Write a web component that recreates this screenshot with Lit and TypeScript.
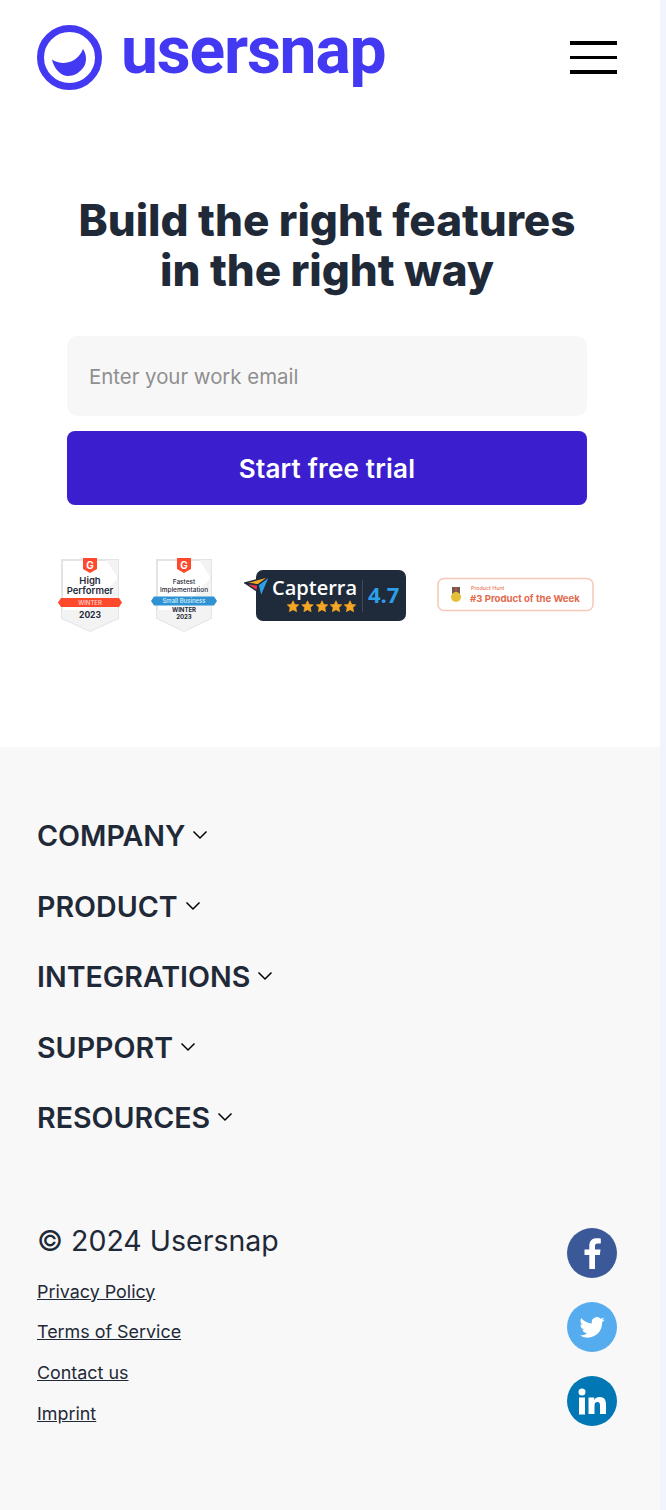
import { LitElement, html, css, svg } from "lit";
import { customElement } from "lit/decorators.js";

const star = (x: number, fill = "#f6a623") =>
  svg`<polygon transform="translate(${x} 0) scale(1.1)" fill=${fill} stroke=${fill} stroke-width=".6" stroke-linejoin="round" points="0,-5.2 1.6,-1.9 5.2,-1.5 2.6,1 3.300,4.700 0,2.900 -3.300,4.700 -2.600,1 -5.200,-1.500 -1.600,-1.900"/>`;

const nav = ["COMPANY", "PRODUCT", "INTEGRATIONS", "SUPPORT", "RESOURCES"];
const links = ["Privacy Policy", "Terms of Service", "Contact us", "Imprint"];

@customElement("app-root")
export class AppRoot extends LitElement {
  static styles = css`
    :host {
      display: block;
      width: 666px;
      height: 1510px;
      background: #f1f5fb;
      font-family: Inter, "Liberation Sans", sans-serif;
      color: #1f2937;
      overflow: hidden;
    }
    .page { width: 660px; }
    .top { background: #fff; height: 747px; padding: 25px 43px 0 37px; box-sizing: border-box; }
    header { display: flex; justify-content: space-between; align-items: center; height: 65px; }
    .brand { display: flex; align-items: center; gap: 19px; height: 65px; }
    .wordmark {
      font-family: Roboto, sans-serif;
      font-weight: 700;
      font-size: 66px;
      line-height: 65px;
      letter-spacing: -1.2px;
      color: #4339f2;
      margin-top: -14px;
    }
    .burger { display: flex; flex-direction: column; gap: 11px; width: 47px; }
    .burger i { display: block; height: 3.5px; background: #000; }
    h1 {
      margin: 105px 0 0;
      font-size: 44px;
      line-height: 50px;
      font-weight: 800;
      letter-spacing: -0.05px;
      text-align: center;
      color: #1f2937;
    }
    form { margin: 41px 30px 0; display: flex; flex-direction: column; gap: 15px; }
    .input {
      height: 80px;
      background: #f7f7f7;
      border-radius: 10px;
      display: flex;
      align-items: center;
      padding: 0 22px;
      font-size: 20.4px;
      color: #8f8f8f;
    }
    .btn {
      height: 74px;
      background: #3b1fcf;
      border-radius: 8px;
      color: #fff;
      font-size: 26px;
      letter-spacing: 0.2px;
      font-weight: 600;
      display: flex;
      align-items: center;
      justify-content: center;
    }
    .badges { display: flex; align-items: center; margin: 51px 0 0 21px; height: 80px; }
    .badges svg { display: block; flex: none; }
    .b2 { margin-left: 27px; }
    .b3 { margin: -2px 0 0 27px; }
    .b4 { margin: -2px 0 0 29px; }
    footer { background: #f8f8f9; height: 763px; padding: 0 43px 0 37px; box-sizing: border-box; }
    .nav { padding-top: 54px; display: flex; flex-direction: column; }
    .nav div {
      height: 70.5px;
      display: flex;
      align-items: center;
      gap: 7px;
      font-size: 28.6px;
      font-weight: 600;
      color: #1f2937;
      line-height: 36px;
    }
    .nav svg { margin-top: -2px; }
    .bottom { display: flex; justify-content: space-between; margin-top: 69px; }
    .copy { font-size: 28.5px; line-height: 36px; color: #1f2937; margin-bottom: 22px; }
    .legal a { display: block; font-size: 17.9px; line-height: 22px; margin-bottom: 18.9px; color: #1f2937; text-decoration: underline; }
    .social { display: flex; flex-direction: column; gap: 24px; padding-top: 5px; }
    .social svg { display: block; }
  `;

  render() {
    return html`
      <div class="page">
        <div class="top">
          <header>
            <div class="brand">
              <svg width="65" height="65" viewBox="0 0 65 65">
                <circle cx="32.5" cy="32.5" r="29" fill="none" stroke="#4339f2" stroke-width="7"></circle>
                <path fill="#4339f2" d="M15 34.500C20 38 28 39 34 36.500 40 34 44 29 46 24 50 30 50 38 46 43 42 48 37 51 31 51 24 51 17 44 15 34.500z"></path>
              </svg>
              <span class="wordmark">usersnap</span>
            </div>
            <div class="burger"><i></i><i></i><i></i></div>
          </header>
          <h1>Build the right features<br />in the right way</h1>
          <form>
            <div class="input">Enter your work email</div>
            <div class="btn">Start free trial</div>
          </form>
          <div class="badges">
            <svg width="66" height="76" viewBox="0 0 66 76">
              <path d="M4 2h56v58l-28 13-28-13z" fill="#fff" stroke="#e4e4e4" stroke-width="2"></path>
              <path d="M48 2h12v18L30 52H4v8l28 13 28-13V20z" fill="#f3f3f3"></path>
              <path d="M25 0h14v11l-7 4-7-4z" fill="#ff492c"></path>
              <text x="32" y="10.500" font-size="10" font-weight="700" fill="#fff" text-anchor="middle" font-family="Inter">G</text>
              <text x="32" y="26" font-size="9.500" font-weight="600" fill="#1f2937" text-anchor="middle" font-family="Inter">High</text>
              <text x="32" y="35.500" font-size="9.500" font-weight="600" fill="#1f2937" text-anchor="middle" font-family="Inter">Performer</text>
              <path d="M3 40h58l3 4.500-3 4.500H3l-3-4.500z" fill="#ff492c"></path>
              <text x="32" y="47" font-size="6" font-weight="500" fill="#ffd5cc" text-anchor="middle" font-family="Inter">WINTER</text>
              <text x="32" y="60" font-size="8.500" font-weight="700" fill="#1f2937" text-anchor="middle" font-family="Inter">2023</text>
            </svg>
            <svg class="b2" width="66" height="76" viewBox="0 0 66 76">
              <path d="M6 2h54v58l-27 13-27-13z" fill="#fff" stroke="#e4e4e4" stroke-width="2"></path>
              <path d="M48 2h12v18L30 52H6v8l27 13 27-13V20z" fill="#f3f3f3"></path>
              <path d="M26 0h14v11l-7 4-7-4z" fill="#ff492c"></path>
              <text x="33" y="10.500" font-size="10" font-weight="700" fill="#fff" text-anchor="middle" font-family="Inter">G</text>
              <text x="33" y="26" font-size="6.500" font-weight="500" fill="#1f2937" text-anchor="middle" font-family="Inter">Fastest</text>
              <text x="33" y="33.500" font-size="6.500" font-weight="500" fill="#1f2937" text-anchor="middle" font-family="Inter">Implementation</text>
              <path d="M3 38.500h60l3 4.500-3 4.500H3l-3-4.500z" fill="#2f93d3"></path>
              <text x="33" y="45.200" font-size="6" font-weight="500" fill="#d8eefb" text-anchor="middle" font-family="Inter">Small Business</text>
              <text x="33" y="54" font-size="6" font-weight="700" fill="#1f2937" text-anchor="middle" font-family="Inter">WINTER</text>
              <text x="33" y="61" font-size="6" font-weight="700" fill="#1f2937" text-anchor="middle" font-family="Inter">2023</text>
            </svg>
            <svg class="b3" width="164" height="54" viewBox="0 0 164 54">
              <rect x="12" y="2" width="150" height="51" rx="7" fill="#1f2a3a"></rect>
              <g stroke="#1f2a3a" stroke-width="1.500" stroke-linejoin="round">
                <path d="M1 15L26 8 14 17z" fill="#f6a623"></path>
                <path d="M1 15l13 2-1 6z" fill="#e8394a"></path>
                <path d="M26 8L14 17l3 12z" fill="#2b9fe8"></path>
              </g>
              <text x="28" y="27" font-size="20" font-weight="600" fill="#fff" font-family="'Open Sans'">Capterra</text>
              <g transform="translate(49 38.500)">${star(0)}${star(14.500)}${star(29)}${star(43)}${star(57)}</g>
              <rect x="118" y="12" width="1" height="32" fill="#3c4a5e"></rect>
              <text x="124" y="35" font-size="22" font-weight="700" fill="#2b9fe8" font-family="'Open Sans'">4.7</text>
            </svg>
            <svg class="b4" width="158" height="36" viewBox="0 0 158 36">
              <rect x="1" y="1.500" width="155" height="32" rx="6" fill="#fff" stroke="#f6c8b8" stroke-width="1.500"></rect>
              <rect x="15" y="10" width="8" height="7" fill="#6d5a50"></rect>
              <rect x="18" y="10" width="2" height="7" fill="#c0503c"></rect>
              <circle cx="19" cy="20" r="5" fill="#e3c037"></circle>
              <text x="34" y="12.500" font-size="5.300" font-weight="500" fill="#e9775a" font-family="Inter">Product Hunt</text>
              <text x="33" y="25" font-size="9.600" font-weight="700" fill="#e2694b" font-family="Inter">#3 Product of the Week</text>
            </svg>
          </div>
        </div>
        <footer>
          <div class="nav">
            ${nav.map(
              (n) => html`<div>${n}
                <svg width="16" height="10" viewBox="0 0 16 10"><path d="M1.500 1.500L8 8l6.500-6.500" fill="none" stroke="#000" stroke-width="1.500"></path></svg>
              </div>`
            )}
          </div>
          <div class="bottom">
            <div>
              <div class="copy">© 2024 Usersnap</div>
              <div class="legal">${links.map((l) => html`<a>${l}</a>`)}</div>
            </div>
            <div class="social">
              <svg width="50" height="50" viewBox="0 0 50 50"><circle cx="25" cy="25" r="25" fill="#3b5998"></circle><path fill="#fff" d="M28 41V27h4.800l.7-5.600H28v-3.300c0-1.600.5-2.700 2.800-2.700h3V10.400c-.5-.1-2.300-.2-4.300-.2-4.300 0-7.200 2.600-7.200 7.400v3.800h-4.800V27h4.800v14z"></path></svg>
              <svg width="50" height="50" viewBox="0 0 50 50"><circle cx="25" cy="25" r="25" fill="#55acee"></circle><g transform="translate(12.500 12.800) scale(1.050)"><path fill="#fff" d="M23.953 4.570a10 10 0 01-2.825.775 4.958 4.958 0 002.163-2.723c-.951.555-2.005.959-3.127 1.184a4.920 4.920 0 00-8.384 4.482C7.690 8.095 4.067 6.130 1.640 3.162a4.822 4.822 0 00-.666 2.475c0 1.710.870 3.213 2.188 4.096a4.904 4.904 0 01-2.228-.616v.060a4.923 4.923 0 003.946 4.827 4.996 4.996 0 01-2.212.085 4.936 4.936 0 004.604 3.417 9.867 9.867 0 01-6.102 2.105c-.390 0-.779-.023-1.170-.067a13.995 13.995 0 007.557 2.209c9.053 0 13.998-7.496 13.998-13.985 0-.210 0-.420-.015-.630A9.935 9.935 0 0024 4.590z"></path></g></svg>
              <svg width="50" height="50" viewBox="0 0 50 50"><circle cx="25" cy="25" r="25" fill="#0177b5"></circle><circle cx="15" cy="16" r="3.500" fill="#fff"></circle><rect x="12" y="21.500" width="6" height="17" fill="#fff"></rect><path fill="#fff" d="M21.500 21.500h5.700v2.400c1-1.600 2.900-2.900 5.300-2.900 5 0 6.500 3 6.500 7.700v9.300h-6v-8.300c0-2-.4-3.700-2.500-3.700-2.200 0-3 1.600-3 3.700v8.300h-6z"></path></svg>
            </div>
          </div>
        </footer>
      </div>
    `;
  }
}
